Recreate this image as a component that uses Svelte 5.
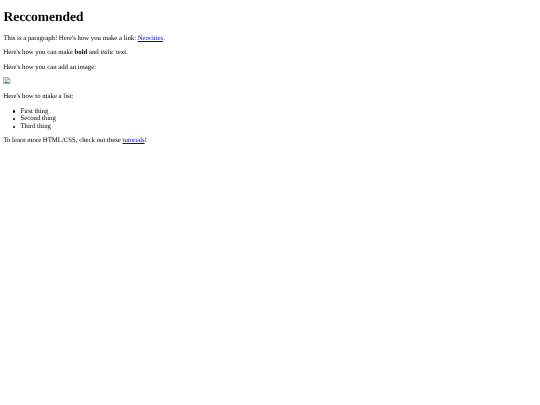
<script>
  const items = ['First thing', 'Second thing', 'Third thing'];
</script>

<main class="page">
  <h1>Reccomended</h1>
  <p>This is a paragraph! Here's how you make a link: <a href="#neocities">Neocities</a>.</p>
  <p>Here's how you can make <strong>bold</strong> and <em>italic</em> text.</p>
  <p>Here's how you can add an image:</p>
  <p class="image-row">
    <!-- broken image placeholder -->
    <svg class="broken" viewBox="0 0 16 16" role="img" aria-label="Broken image">
      <path d="M1 1h10l4 4v10H1z" fill="#fff" stroke="#8a8a8a" stroke-width="1.4" />
      <path d="M11 1v4h4" fill="#ddd" stroke="#8a8a8a" stroke-width="1.4" />
      <path d="M3 3h7v5H3z" fill="#a9c2ee" />
      <path d="M2 14l4-6 3 3 2-2 3 5z" fill="#2f9a3f" />
    </svg>
  </p>
  <p>Here's how to make a list:</p>
  <ul>
    {#each items as item}
      <li>{item}</li>
    {/each}
  </ul>
  <p>To learn more HTML/CSS, check out these <a href="#tutorials">tutorials</a>!</p>
</main>

<style>
  :global(body) {
    margin: 0;
    background: #fff;
  }

  .page {
    padding: 3.4px;
    font-family: "Liberation Serif", serif;
    font-size: 6.75px;
    line-height: 7.6px;
    color: #000;
    text-rendering: geometricPrecision;
    filter: blur(0.25px);
  }

  h1 {
    margin: 6px 0 10px;
    font-size: 13.5px;
    line-height: 15.5px;
    font-weight: bold;
  }

  p {
    margin: 6.75px 0;
  }

  .image-row {
    height: 8.5px;
  }

  ul {
    margin: 6.75px 0;
    padding: 0 0 0 17px;
    list-style: none;
  }

  li {
    position: relative;
  }

  li::before {
    content: "";
    position: absolute;
    left: -7.5px;
    top: 2.9px;
    width: 2.2px;
    height: 2.2px;
    border-radius: 50%;
    background: #000;
  }

  a {
    color: #0000ee;
  }

  .broken {
    display: block;
    width: 7.5px;
    height: 7.5px;
    transform: translateY(-1px);
  }
</style>
